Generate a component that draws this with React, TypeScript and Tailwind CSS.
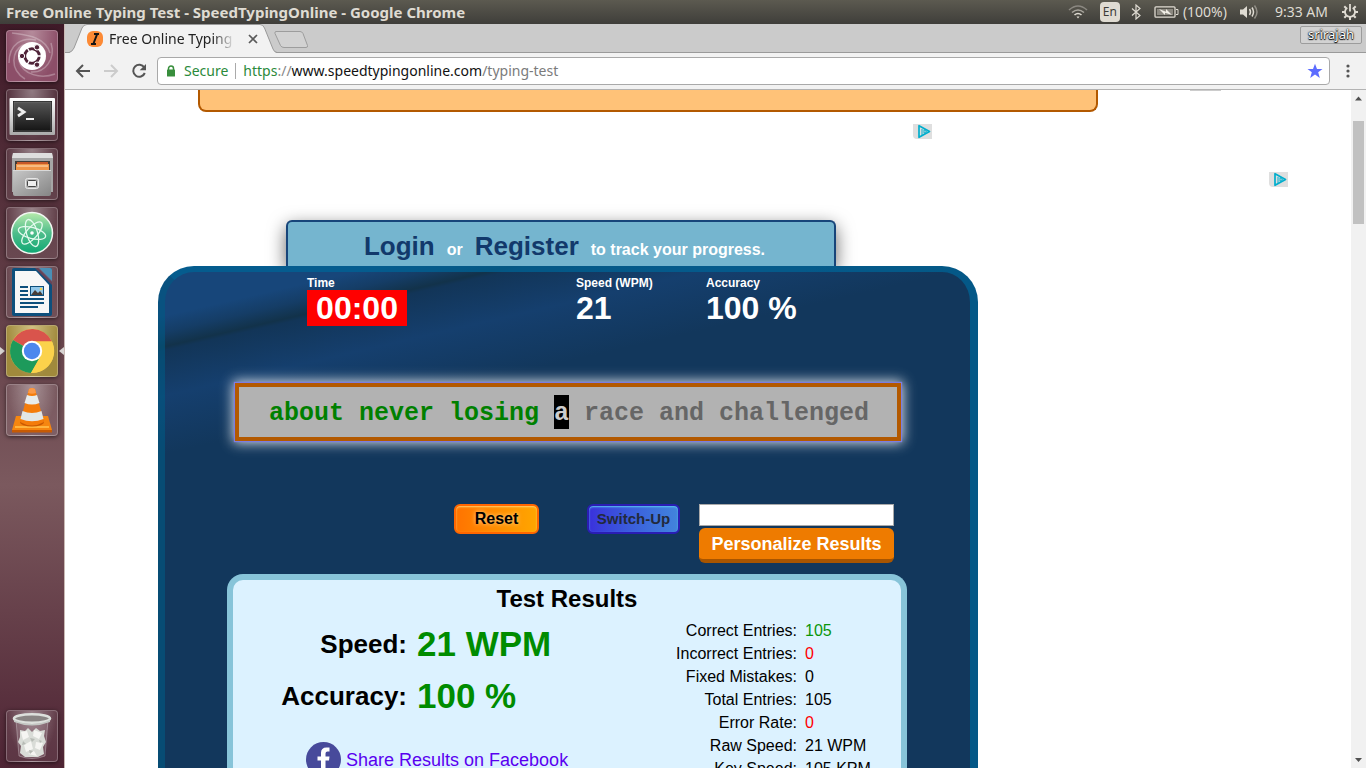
import type { ReactNode } from "react";

const UI_FONT = "font-['Noto_Sans','Open_Sans',sans-serif]";

function Tile({ label, tone, children }: { label: string; tone?: string; children: ReactNode }) {
  return (
    <button
      type="button"
      aria-label={label}
      className={`flex size-[52px] shrink-0 items-center justify-center rounded border border-white/25 shadow-[0_1px_4px_rgba(0,0,0,0.55)] ${
        tone ?? "bg-[radial-gradient(ellipse_at_50%_0%,rgba(255,255,255,0.4),rgba(255,255,255,0.08)_70%)]"
      }`}
    >
      {children}
    </button>
  );
}

function DashIcon() {
  return (
    <svg viewBox="0 0 50 50" className="size-[50px]">
      <g fill="none" stroke="#fff" strokeOpacity=".28" strokeWidth="1.5">
        <path d="M5 2C18 4 38 5 43 22" />
        <path d="M2 32C2 12 16 6 29 9" />
        <path d="M18 48C2 38 5 20 16 14" />
        <path d="M48 43C34 48 16 44 12 30" />
        <path d="M44 12C49 28 38 42 24 41" />
      </g>
      <circle cx="25" cy="25" r="14" fill="#fff" />
      <circle cx="25" cy="25" r="7.2" fill="none" stroke="#4f2338" strokeWidth="3" />
      <g stroke="#fff" strokeWidth="1.4">
        <path d="M25 25L36 25M25 25L19.5 15.5M25 25L19.5 34.5" />
      </g>
      <circle cx="25" cy="25" r="5.6" fill="#fff" />
      <g fill="#4f2338" stroke="#fff" strokeWidth="1">
        <circle cx="15" cy="25" r="2.7" />
        <circle cx="30" cy="16.3" r="2.7" />
        <circle cx="30" cy="33.7" r="2.7" />
      </g>
    </svg>
  );
}

function TerminalIcon() {
  return (
    <svg viewBox="0 0 50 50" className="size-[50px]">
      <defs>
        <linearGradient id="termFrame" x1="0" y1="0" x2="0" y2="1">
          <stop offset="0" stopColor="#fff" />
          <stop offset="1" stopColor="#aaa" />
        </linearGradient>
        <linearGradient id="termScreen" x1="0" y1="0" x2="0" y2="1">
          <stop offset="0" stopColor="#555" />
          <stop offset="1" stopColor="#151515" />
        </linearGradient>
      </defs>
      <rect x="2.500" y="8" width="45.500" height="37" rx="1" fill="url(#termFrame)" />
      <rect x="6" y="11" width="39" height="31" fill="#1c1c1c" />
      <rect x="7" y="12" width="37" height="29" fill="url(#termScreen)" stroke="#777" strokeWidth=".6" />
      <path d="M11 18L17 22L11 26" fill="none" stroke="#eee" strokeWidth="2.8" />
      <path d="M19 29H27" stroke="#eee" strokeWidth="2" />
    </svg>
  );
}

function FilesIcon() {
  return (
    <svg viewBox="0 0 50 50" className="size-[50px]">
      <defs>
        <linearGradient id="cabinet" x1="0" y1="0" x2="1" y2="1">
          <stop offset="0" stopColor="#c8c8c8" />
          <stop offset="1" stopColor="#858585" />
        </linearGradient>
      </defs>
      <path d="M6 4H45L46 9V43H5V9Z" fill="#a6a6a6" />
      <path d="M6 4H45L46 9H5Z" fill="#dedede" />
      <rect x="8" y="12" width="35" height="12" fill="#423c38" />
      <rect x="10" y="13" width="31" height="3" fill="#c65829" />
      <rect x="9" y="15" width="33" height="6" fill="#f09447" />
      <path d="M10 17H41" stroke="#ffe3bf" />
      <path d="M6 21H44V45Q44 47 42 47H8Q6 47 6 45Z" fill="url(#cabinet)" />
      <path d="M6 21.500H44" stroke="#d9d9d9" />
      <rect x="18.500" y="29.500" width="13" height="10" rx="2" fill="#b9b9b9" stroke="#e7e7e7" />
      <rect x="20.500" y="31.500" width="9" height="6" rx="1" fill="#eee" stroke="#444" />
    </svg>
  );
}

function AtomIcon() {
  return (
    <svg viewBox="0 0 50 50" className="size-[50px]">
      <defs>
        <linearGradient id="atomBg" x1="0" y1="0" x2="0" y2="1">
          <stop offset="0" stopColor="#b8ebac" />
          <stop offset=".5" stopColor="#4fbd8b" />
          <stop offset="1" stopColor="#0ea773" />
        </linearGradient>
      </defs>
      <circle cx="25" cy="25" r="20.500" fill="url(#atomBg)" stroke="#f2f7f2" strokeWidth="1.500" />
      <g fill="none" stroke="#e4faee" strokeWidth="1.300">
        <ellipse cx="25" cy="25" rx="14" ry="5.500" transform="rotate(15 25 25)" />
        <ellipse cx="25" cy="25" rx="14" ry="5.500" transform="rotate(73 25 25)" />
        <ellipse cx="25" cy="25" rx="14" ry="5.500" transform="rotate(132 25 25)" />
      </g>
      <circle cx="25" cy="25" r="1.800" fill="#fff" />
    </svg>
  );
}

function WriterIcon() {
  return (
    <svg viewBox="0 0 50 50" className="size-[50px]">
      <path d="M7 1H43Q45 1 45 3V47Q45 49 43 49H7Q5 49 5 47V3Q5 1 7 1Z" fill="#0d4f7c" />
      <path d="M31 1H43Q45 1 45 3V15Z" fill="#4a8fb5" />
      <path d="M28 1H32L45 14V18Z" fill="#8c3e49" opacity=".7" />
      <path d="M8 4H29L42 18V46H8Z" fill="#f7f7f7" />
      <g stroke="#0d4f7c" strokeWidth="2">
        <path d="M13 20H21M13 24H21M13 28H21M13 32H37M13 36H37M13 40H31" />
      </g>
      <rect x="23.500" y="19.500" width="13" height="9" fill="#92c8ea" stroke="#0d4f7c" />
      <path d="M24 28L28 23L31 26L33 24L36 28Z" fill="#473d36" />
      <circle cx="34" cy="22" r="1.300" fill="#f6d34d" />
    </svg>
  );
}

function ChromeIcon() {
  return (
    <svg viewBox="0 0 50 50" className="size-[50px]">
      <circle cx="25" cy="25" r="22" fill="#fbd24b" />
      <path d="M25 25L6 14A22 22 0 0 1 45 15.500H25Z" fill="#d9544c" />
      <path d="M25 25L6 14A22 22 0 0 0 24 47L33.500 31Z" fill="#1d9a5b" />
      <path d="M25 25V15.500H45A22 22 0 0 1 24 47L33.500 30Z" fill="#fbd24b" />
      <circle cx="25" cy="25" r="10.200" fill="#fff" />
      <circle cx="25" cy="25" r="8.200" fill="#4b87ee" />
    </svg>
  );
}

function ConeIcon() {
  return (
    <svg viewBox="0 0 50 50" className="size-[50px]">
      <path d="M9 31H41L45 45V47H5V45Z" fill="#f58610" />
      <path d="M5 45H45V47.500H5Z" fill="#c65a04" />
      <path d="M8 42H42" stroke="#ffb43e" strokeWidth="2" />
      <ellipse cx="25" cy="37" rx="12" ry="4.500" fill="#c95902" />
      <path d="M22 4Q25 2 28 4L37 37Q25 44 13 37Z" fill="#f47c0b" />
      <path d="M20 10Q25 12 30 10L32.500 18Q25 21 17.500 18Z" fill="#e8ecec" />
      <path d="M15.500 26Q25 30 34.500 26L36.500 34Q25 38.500 13.500 34Z" fill="#e2e6e6" />
      <path d="M22 4Q25 2 28 4L29 8Q25 9.500 21 8Z" fill="#fb9a48" />
    </svg>
  );
}

function TrashIcon() {
  return (
    <svg viewBox="0 0 50 50" className="size-[50px]">
      <path d="M9 9H41L38 45Q25 50 12 45Z" fill="#e9dfe4" fillOpacity=".15" stroke="#fff" strokeOpacity=".3" />
      <path d="M13 19L18 20L21 17L25 21L29 17L33 20L38 19L37 25L39 31L36 36L37 43L31 46H18L13 42L14 35L11 31L13 26Z" fill="#d9dcd7" />
      <g fill="#f5f5f2">
        <path d="M14 21L20 20L22 26L16 29ZM27 19L35 22L32 28L26 25ZM17 34L24 30L26 38L19 41ZM29 31L36 32L33 39L28 37ZM21 43L27 40L30 45Z" />
      </g>
      <g fill="#b7bbb5">
        <path d="M23 27L28 28L25 31ZM16 30L19 33L15 34ZM32 29L35 30L33 32ZM22 39L26 40L23 43Z" />
      </g>
      <ellipse cx="25" cy="7.500" rx="18" ry="4.300" fill="#8a8584" stroke="#dde0dc" strokeWidth="2.600" />
      <path d="M7 9Q25 17 43 9V11Q25 18 7 11Z" fill="#c3c7c3" />
    </svg>
  );
}

function MenuBar() {
  return (
    <header
      className={`${UI_FONT} flex h-6 shrink-0 items-center justify-between bg-linear-to-b from-[#5c5a50] to-[#3f3e3a] pr-2 pl-1.5 text-[#dfdbd2]`}
    >
      <h1 className="text-[15px] leading-6 font-bold whitespace-nowrap">Free Online Typing Test - SpeedTypingOnline - Google Chrome</h1>
      <div className="flex items-center text-sm">
        <svg viewBox="0 0 20 14" className="mr-3 h-3.5 w-5" fill="none" strokeWidth="1.600">
          <path d="M1 5Q10-3 19 5" stroke="#8b8881" />
          <path d="M4 7.500Q10 2.500 16 7.500" stroke="#a9a69e" />
          <path d="M6.500 10Q10 7 13.500 10" stroke="#dfdbd2" />
          <path d="M8.500 11.500H11.500L10 13.500Z" fill="#dfdbd2" />
        </svg>
        <span className="mr-2.5 flex h-5 w-5 items-center justify-center rounded-sm bg-[#dfdbd2] text-xs text-[#3c3b37]">En</span>
        <svg viewBox="0 0 12 16" className="mr-3 h-4 w-3" fill="none" stroke="#dfdbd2" strokeWidth="1.200">
          <path d="M2 4.500L10 11.500L6 15V1L10 4.500L2 11.500" />
        </svg>
        <svg viewBox="0 0 25 12" className="mr-1 h-3 w-[25px]">
          <rect x="1" y=".8" width="20" height="10.400" rx="1" fill="none" stroke="#dfdbd2" strokeWidth="1.300" />
          <rect x="3" y="3" width="16" height="6" fill="#8b8880" />
          <path d="M22 3.500H24V8.500H22" fill="none" stroke="#dfdbd2" />
          <path d="M5 3L12 5.800V3L18 9L11 6.800V9Z" fill="#f1eee6" />
        </svg>
        <span className="mr-3">(100%)</span>
        <svg viewBox="0 0 20 16" className="mr-4 h-4 w-5" fill="none" strokeWidth="1.500">
          <path d="M1 5.500H4L8 2V14L4 10.500H1Z" fill="#dfdbd2" />
          <path d="M10.500 5Q12.500 8 10.500 11M13 3.500Q16 8 13 12.500" stroke="#dfdbd2" />
          <path d="M15.500 1.500Q20.500 8 15.500 14.500" stroke="#918e86" />
        </svg>
        <time className="mr-3.5">9:33 AM</time>
        <svg viewBox="0 0 16 16" className="size-4" fill="none" stroke="#dfdbd2">
          <path d="M5.300 3.700A5 5 0 1 0 10.700 3.700" strokeWidth="1.800" />
          <path d="M8 0V7.500" strokeWidth="1.800" />
          <path d="M2.300 2.300L4.200 4.200M13.700 2.300L11.800 4.200M0 8H3M13 8H16M2.300 13.700L4.300 11.700M13.700 13.700L11.700 11.700M8 13V16" strokeWidth="2" />
        </svg>
      </div>
    </header>
  );
}

function Launcher() {
  return (
    <nav
      aria-label="Launcher"
      className="flex w-[65px] shrink-0 flex-col items-center gap-[7px] border-r border-[#c9b9b4] bg-linear-to-b from-[#3f1a28] via-[#7b595e] via-62% to-[#4e2434] py-1.5"
    >
      <Tile label="Search your computer" tone="bg-[radial-gradient(ellipse_at_50%_0%,#b58b9b,#8c4e68_75%)]">
        <DashIcon />
      </Tile>
      <Tile label="Terminal">
        <TerminalIcon />
      </Tile>
      <Tile label="Files">
        <FilesIcon />
      </Tile>
      <Tile label="Atom">
        <AtomIcon />
      </Tile>
      <Tile label="LibreOffice Writer">
        <WriterIcon />
      </Tile>
      <div className="flex items-center gap-px">
        <svg viewBox="0 0 5 8" className="h-2 w-[5px]" fill="#d8d4d2">
          <path d="M0 0L5 4L0 8Z" />
        </svg>
        <Tile label="Google Chrome" tone="bg-[radial-gradient(ellipse_at_50%_0%,#d0c083,#a08a3c_75%)]">
          <ChromeIcon />
        </Tile>
        <svg viewBox="0 0 5 8" className="h-2 w-[5px]" fill="#d8d4d2">
          <path d="M5 0L0 4L5 8Z" />
        </svg>
      </div>
      <Tile label="VLC media player">
        <ConeIcon />
      </Tile>
      <div className="mt-auto">
        <Tile label="Trash">
          <TrashIcon />
        </Tile>
      </div>
    </nav>
  );
}

function TabStrip() {
  return (
    <div className={`${UI_FONT} flex h-[29px] shrink-0 items-start border-b border-[#9a9a9a] bg-[#cbcbcb] pl-1`}>
      <div className="relative flex h-[29px] w-[208px] items-center pr-[18px] pl-[18px]">
        <svg viewBox="0 0 208 29" className="absolute inset-0 h-[29px] w-[208px]">
          <path d="M0 29Q3 28 5 24L13 4Q14.500 .5 18 .5H191Q194 .5 195.500 4L204 25Q205 28 208 29Z" fill="#f2f2f2" />
          <path d="M0 28.500Q3 28 5 24L13 4Q14.500 .5 18 .5H191Q194 .5 195.500 4L204 25Q205 28 208 28.500" fill="none" stroke="#999" />
        </svg>
        <svg viewBox="0 0 16 16" className="relative mr-1.5 size-4 shrink-0">
          <rect width="16" height="16" rx="6" fill="#fc8a35" />
          <path d="M7 3H12M4 13H9M10 3.500L6.500 12.500" stroke="#141414" strokeWidth="2" fill="none" />
        </svg>
        <span className="relative flex-1 overflow-hidden text-sm whitespace-nowrap text-[#222] [mask-image:linear-gradient(to_right,black_82%,transparent)]">
          Free Online Typing
        </span>
        <button type="button" aria-label="Close tab" className="relative ml-3 flex size-3 items-center justify-center">
          <svg viewBox="0 0 10 10" className="size-2.5" stroke="#5a5a5a" strokeWidth="1.700">
            <path d="M1 1L9 9M9 1L1 9" />
          </svg>
        </button>
      </div>
      <button type="button" aria-label="New tab" className="mt-1.5 -ml-1">
        <svg viewBox="0 0 36 19" className="h-[19px] w-9">
          <path d="M3 1.500H27Q29 1.500 30 3.500L34.500 15.500Q35 17.500 33 17.500H11Q8.500 17.500 7.500 15.500L2 3.500Q1.500 1.500 3 1.500Z" fill="#d2d2d2" stroke="#9d9d9d" />
        </svg>
      </button>
      <button
        type="button"
        className="mt-0.5 mr-1 ml-auto flex h-[18px] items-center rounded-xs border border-[#9c9c9c] bg-[#d2d2d2] px-[7px] text-[13px] text-white [text-shadow:0_0_1px_#000,0_0_2px_#000,0_1px_1px_#000]"
      >
        srirajah
      </button>
    </div>
  );
}

function Toolbar() {
  return (
    <div className={`${UI_FONT} flex h-[37px] shrink-0 items-center border-b border-[#b3b3b3] bg-[#f2f2f2] pr-3.5 pl-2.5`}>
      <button type="button" aria-label="Back" className="mr-3">
        <svg viewBox="0 0 16 16" className="size-4" fill="none" stroke="#555" strokeWidth="2">
          <path d="M15 8H2.500M8 2L2 8L8 14" />
        </svg>
      </button>
      <button type="button" aria-label="Forward" className="mr-3">
        <svg viewBox="0 0 16 16" className="size-4" fill="none" stroke="#ccc" strokeWidth="2">
          <path d="M1 8H13.500M8 2L14 8L8 14" />
        </svg>
      </button>
      <button type="button" aria-label="Reload" className="mr-2.5">
        <svg viewBox="0 0 16 16" className="size-4">
          <path d="M13.300 4.500A6 6 0 1 0 13.800 10" fill="none" stroke="#555" strokeWidth="2" />
          <path d="M15 1V7.300H8.700Z" fill="#555" />
        </svg>
      </button>
      <div className="flex h-7 flex-1 items-center rounded-sm border border-[#a9a9a9] bg-white px-2 text-sm">
        <svg viewBox="0 0 10 12" className="mr-2 h-3 w-2.5">
          <path d="M2.500 5V3.500A2.500 2.500 0 0 1 7.500 3.500V5" fill="none" stroke="#388e3c" strokeWidth="1.500" />
          <rect x="1" y="4.500" width="8" height="7" rx=".6" fill="#388e3c" />
        </svg>
        <span className="text-[#2b8a3a]">Secure</span>
        <span className="mx-[7px] h-4 w-px bg-[#aaa]" />
        <span role="textbox" aria-label="Address" className="flex-1 whitespace-nowrap">
          <span className="text-[#2b8a3a]">https</span>
          <span className="text-[#888]">://</span>
          <span className="text-[#111]">www.speedtypingonline.com</span>
          <span className="text-[#7b7b7b]">/typing-test</span>
        </span>
        <button type="button" aria-label="Bookmark this page">
          <svg viewBox="0 0 16 16" className="-mr-0.5 size-4" fill="#5c6cff">
            <path d="M8 .7L10 6H15.500L11.200 9.300L12.800 15L8 11.600L3.200 15L4.800 9.300L.5 6H6Z" />
          </svg>
        </button>
      </div>
      <button type="button" aria-label="Menu" className="ml-3.5">
        <svg viewBox="0 0 8 16" className="h-4 w-2" fill="#555">
          <circle cx="4" cy="3" r="1.600" />
          <circle cx="4" cy="8" r="1.600" />
          <circle cx="4" cy="13" r="1.600" />
        </svg>
      </button>
    </div>
  );
}

function AdMark() {
  return (
    <a href="#adchoices" aria-label="AdChoices" className="flex h-[15px] w-[19px] items-center justify-end rounded-bl bg-[#dfdfdf] pr-px">
      <svg viewBox="0 0 14 15" className="h-[15px] w-3.5" fill="none" stroke="#00aecd">
        <path d="M2 1.700V13.300L12.500 7.500Z" strokeWidth="1.700" strokeLinejoin="round" />
        <path d="M5 5V11" strokeWidth="1" />
        <path d="M7 5.700L9.500 7.500L7 9.300Z" strokeWidth="1" />
      </svg>
    </a>
  );
}

const stats = [
  { label: "Speed (WPM)", value: "21" },
  { label: "Accuracy", value: "100 %" },
];

const scores = [
  { label: "Speed:", value: "21 WPM" },
  { label: "Accuracy:", value: "100 %" },
];

const details = [
  { label: "Correct Entries:", value: "105", color: "text-[#0a960a]" },
  { label: "Incorrect Entries:", value: "0", color: "text-[#ff0000]" },
  { label: "Fixed Mistakes:", value: "0", color: "text-black" },
  { label: "Total Entries:", value: "105", color: "text-black" },
  { label: "Error Rate:", value: "0", color: "text-[#ff0000]" },
  { label: "Raw Speed:", value: "21 WPM", color: "text-black" },
  { label: "Key Speed:", value: "105 KPM", color: "text-black" },
];

function Results() {
  return (
    <section className="mt-[11px] ml-[62px] w-[680px] rounded-t-2xl border-6 border-b-0 border-[#87c4d9] bg-[#dcf2ff] pb-10 text-black">
      <h2 className="pt-1 text-center text-2xl leading-[30px] font-bold">Test Results</h2>
      <div className="flex items-start">
        <div>
          <table className="mt-1">
            <tbody>
              {scores.map((s) => (
                <tr key={s.label} className="h-[52px]">
                  <th scope="row" className="w-[174px] text-right text-[26px] font-bold">
                    {s.label}
                  </th>
                  <td className="pl-2.5 text-[35px] leading-10 font-bold text-[#008c00]">{s.value}</td>
                </tr>
              ))}
            </tbody>
          </table>
          <a href="#share" className="mt-5 ml-[73px] flex items-center gap-[5px] text-lg text-[#5a00f0]">
            <svg viewBox="0 0 35 35" className="size-[35px]">
              <circle cx="17.500" cy="17.500" r="17.500" fill="#474a9b" />
              <path d="M15 29V18.500H11.500V14.500H15V11Q15 5.500 20.500 5.500H23.500V9.500H21.500Q19.500 9.500 19.500 11.500V14.500H23.500L23 18.500H19.500V29Z" fill="#fff" />
            </svg>
            Share Results on Facebook
          </a>
        </div>
        <table className="mt-[5px] ml-auto">
          <tbody>
            {details.map((d) => (
              <tr key={d.label} className="leading-[23px]">
                <th scope="row" className="text-right font-normal">
                  {d.label}
                </th>
                <td className={`w-[104px] pl-2 ${d.color}`}>{d.value}</td>
              </tr>
            ))}
          </tbody>
        </table>
      </div>
    </section>
  );
}

function Game() {
  return (
    <section className="w-[820px] rounded-t-[36px] border-t-6 border-r-8 border-l-7 border-[#006496]/75 border-l-[#005a85]/60 bg-[linear-gradient(167deg,#17467a_0px,#17467a_50px,#153d66_66px,#12324a_80px,#123558_84px,#153f6e_128px,#12375c_185px)] bg-origin-border pt-1">
      <div className="flex pl-[142px] font-bold text-white">
        <div className="w-[269px]">
          <p className="text-xs leading-[14px]">Time</p>
          <p className="h-9 w-[100px] bg-[#ff0000] text-center text-[32px] leading-9">00:00</p>
        </div>
        {stats.map((s) => (
          <div key={s.label} className="w-[130px]">
            <p className="text-xs leading-[14px]">{s.label}</p>
            <p className="text-[32px] leading-9">{s.value}</p>
          </div>
        ))}
      </div>

      <div
        role="textbox"
        aria-label="Text to type"
        className="mt-[57px] ml-[70px] flex h-[58px] w-[666px] items-center border-4 border-[#b35900] bg-[#b2b2b2] pl-[30px] font-['Liberation_Mono','Courier_New',monospace] text-[25px] leading-[30px] font-bold whitespace-pre text-[#666] shadow-[0_0_1px_1px_#7d7de0,0_0_12px_2px_rgba(255,255,255,0.85)]"
      >
        <span className="pt-1 text-[#008000]">about never losing </span>
        <span className="bg-black pt-1 text-[#ccc]">a</span>
        <span className="pt-1"> race and challenged</span>
      </div>

      <div className="mt-[63px] flex items-start pl-[289px]">
        <button
          type="button"
          className="h-[30px] w-[85px] rounded-md border-2 border-[#ff6600] bg-linear-to-r from-[#ff7300] to-[#ffa600] text-base font-bold text-black shadow-[inset_0_1px_2px_#ffd070] [text-shadow:0_0_4px_#ffd9a0]"
        >
          Reset
        </button>
        <button
          type="button"
          className="ml-12 h-[30px] w-[93px] rounded-md border-2 border-[#2a1db4] bg-linear-to-r from-[#3a30dc] to-[#4284dc] text-[15px] font-bold whitespace-nowrap text-[#222a3c] shadow-[inset_0_1px_2px_#5ac8f0]"
        >
          Switch-Up
        </button>
        <form className="ml-[19px] flex w-[195px] flex-col gap-0.5">
          <input aria-label="Your name" className="h-[22px] border border-[#a9a9a9] bg-white px-1 text-sm" />
          <button type="button" className="h-[35px] rounded-md border-b-4 border-[#a85500] bg-[#ee7b00] text-lg font-bold whitespace-nowrap text-white">
            Personalize Results
          </button>
        </form>
      </div>

      <Results />
    </section>
  );
}

function WebPage() {
  return (
    <main className="min-w-0 flex-1 overflow-hidden bg-white font-['Liberation_Sans',Arial,sans-serif]">
      <div className="flex items-start pl-[133px]">
        <div className="h-[22px] w-[900px] rounded-b-lg border-2 border-t-0 border-[#b35900] bg-[#ffc278]" />
        <div className="ml-[92px] h-px w-[31px] bg-[#ccc]" />
      </div>
      <div className="flex items-start">
        <div className="pl-[93px]">
          <div className="ml-[46px] flex h-[108px] w-[728px] items-start justify-end pt-3">
            <AdMark />
          </div>
          <div className="ml-32 flex h-[46px] w-[550px] items-baseline justify-center rounded-t-md border-2 border-b-0 border-[#17457a] bg-[#75b5cf] pt-2 pl-[7px] font-bold text-white shadow-[0_6px_18px_rgba(0,0,0,0.6)]">
            <a href="#login" className="text-[26px] leading-8 text-[#12396b]">
              Login
            </a>
            <span className="mx-3">or</span>
            <a href="#register" className="mr-3 text-[26px] leading-8 text-[#12396b]">
              Register
            </a>
            <span>to track your progress.</span>
          </div>
          <div className="relative">
            <Game />
          </div>
        </div>
        <aside className="flex w-[310px] justify-end pt-[60px]">
          <AdMark />
        </aside>
      </div>
    </main>
  );
}

function Scrollbar() {
  return (
    <div aria-hidden="true" className="flex w-[15px] shrink-0 flex-col items-center bg-[#f1f1f1]">
      <svg viewBox="0 0 15 17" className="h-[17px] w-[15px]" fill="#505050">
        <path d="M4 10.500L7.500 6.500L11 10.500Z" />
      </svg>
      <div className="mt-3.5 h-[103px] w-[11px] bg-[#c1c1c1]" />
      <svg viewBox="0 0 15 17" className="mt-auto h-[17px] w-[15px]" fill="#505050">
        <path d="M4 7L7.500 11L11 7Z" />
      </svg>
    </div>
  );
}

export default function App() {
  return (
    <div className="flex h-screen flex-col overflow-hidden">
      <MenuBar />
      <div className="flex min-h-0 flex-1">
        <Launcher />
        <div className="flex min-w-0 flex-1 flex-col">
          <TabStrip />
          <Toolbar />
          <div className="flex min-h-0 flex-1">
            <WebPage />
            <Scrollbar />
          </div>
        </div>
      </div>
    </div>
  );
}
